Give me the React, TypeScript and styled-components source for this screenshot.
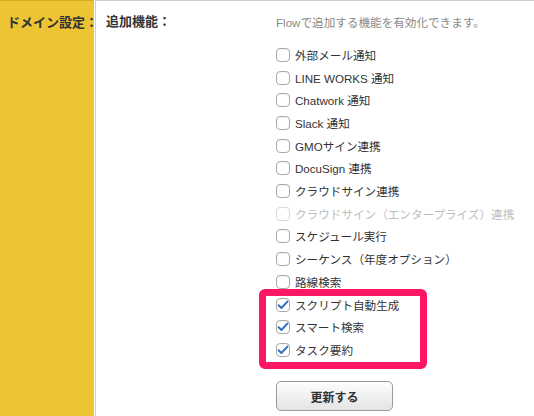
import React from "react";
import styled, { createGlobalStyle, css } from "styled-components";

const GlobalStyle = createGlobalStyle`
  html, body { margin: 0; padding: 0; background: #fff; }
  body {
    font-family: "Liberation Sans", "Noto Sans CJK JP", sans-serif;
    color: #333;
  }
`;

const Page = styled.div`
  display: flex;
  height: 416px;
  overflow: hidden;
`;

const LabelCell = styled.div`
  width: 94px;
  flex: none;
  background: #ecc434;
  border-top: 1px solid #d6ac22;
  box-sizing: border-box;
  padding: 13px 0 0 7px;
  font-size: 13px;
  font-weight: bold;
  line-height: 18px;
  color: #333;
  white-space: nowrap;
  margin-right: 1px;
`;

const FieldCell = styled.div`
  flex: 1;
  border-top: 1px solid #cfcfcf;
  border-left: 1px solid #cfcfcf;
  display: grid;
  grid-template-columns: 170px 1fr;
  padding-left: 10px;
  align-items: start;
`;

const FieldTitle = styled.div`
  padding-top: 12px;
  font-size: 13px;
  font-weight: bold;
  line-height: 18px;
  color: #333;
`;

const Options = styled.div`
  padding-top: 14px;
  display: flex;
  flex-direction: column;
`;

const Description = styled.div`
  font-size: 11.6px;
  line-height: 16px;
  color: #8a8a8a;
  margin-bottom: 12.6px;
  white-space: nowrap;
`;

const Row = styled.label<{ $disabled?: boolean }>`
  display: flex;
  align-items: center;
  height: 22.7px;
  gap: 5px;
  font-size: 11.6px;
  color: ${(p) => (p.$disabled ? "#bdbdbd" : "#333")};
  white-space: nowrap;
`;

const Box = styled.span<{ $disabled?: boolean }>`
  width: 14px;
  height: 14px;
  box-sizing: border-box;
  border: 1px solid ${(p) => (p.$disabled ? "#d8d8d8" : "#a9a9a9")};
  border-radius: 4px;
  background: #fff;
  display: flex;
  align-items: center;
  justify-content: center;
  flex: none;
  ${(p) =>
    !p.$disabled &&
    css`
      box-shadow: inset 0 1px 1px rgba(0, 0, 0, 0.05);
    `}
`;

const Highlight = styled.div`
  position: relative;
  display: flex;
  flex-direction: column;
  &::after {
    content: "";
    position: absolute;
    top: -4px;
    left: -17px;
    width: 168px;
    height: 80px;
    box-sizing: border-box;
    border: 7px solid #fd1763;
    border-radius: 6px;
    pointer-events: none;
  }
`;

const Button = styled.button`
  margin-top: 20px;
  width: 117px;
  height: 30px;
  box-sizing: border-box;
  border: 1px solid #9a9a9a;
  border-radius: 5px;
  background: linear-gradient(#fdfdfd, #e4e4e4);
  font-family: inherit;
  font-size: 12px;
  font-weight: bold;
  color: #333;
  padding: 0;
`;

const Check = () => (
  <svg width="12" height="10" viewBox="0 0 12 10">
    <path
      d="M1.6 5.2 L4.4 8 L10.4 1.6"
      fill="none"
      stroke="#2f72c2"
      strokeWidth="2"
      strokeLinecap="round"
      strokeLinejoin="round"
    />
  </svg>
);

type Opt = { label: string; checked?: boolean; disabled?: boolean };

const plain: Opt[] = [
  { label: "外部メール通知" },
  { label: "LINE WORKS 通知" },
  { label: "Chatwork 通知" },
  { label: "Slack 通知" },
  { label: "GMOサイン連携" },
  { label: "DocuSign 連携" },
  { label: "クラウドサイン連携" },
  { label: "クラウドサイン（エンタープライズ）連携", disabled: true },
  { label: "スケジュール実行" },
  { label: "シーケンス（年度オプション）" },
  { label: "路線検索" },
];

const highlighted: Opt[] = [
  { label: "スクリプト自動生成", checked: true },
  { label: "スマート検索", checked: true },
  { label: "タスク要約", checked: true },
];

const Option = ({ o }: { o: Opt }) => (
  <Row $disabled={o.disabled}>
    <Box $disabled={o.disabled}>{o.checked && <Check />}</Box>
    <span>{o.label}</span>
  </Row>
);

export default function App() {
  return (
    <>
      <GlobalStyle />
      <Page>
        <LabelCell>ドメイン設定：</LabelCell>
        <FieldCell>
          <FieldTitle>追加機能：</FieldTitle>
          <Options>
            <Description>Flowで追加する機能を有効化できます。</Description>
            {plain.map((o) => (
              <Option key={o.label} o={o} />
            ))}
            <Highlight>
              {highlighted.map((o) => (
                <Option key={o.label} o={o} />
              ))}
            </Highlight>
            <div>
              <Button>更新する</Button>
            </div>
          </Options>
        </FieldCell>
      </Page>
    </>
  );
}
